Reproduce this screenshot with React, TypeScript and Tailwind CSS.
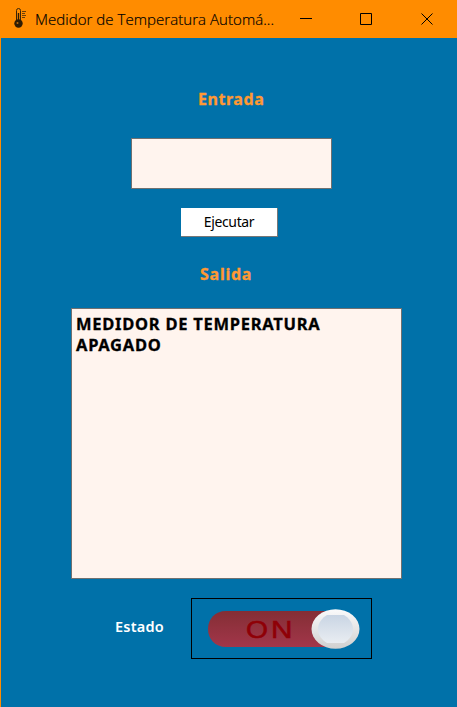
import React from "react";

function Thermometer() {
  return (
    <svg width="14" height="22" viewBox="0 0 14 22" className="shrink-0">
      <path d="M3.500 13V2.500a2 2 0 0 1 4 0V13" fill="none" stroke="#3a2508" strokeWidth="1" />
      <circle cx="5.500" cy="15.500" r="4.200" fill="#2e1c04" />
      <path d="M5.500 5v9" stroke="#2e1c04" strokeWidth="1.400" />
      <circle cx="4.500" cy="15" r="1" fill="#b86a10" />
      <path d="M9 3.500h4M9 5.500h3M9 7.500h4M9 9.500h3" stroke="#6b3f08" strokeWidth="1" />
    </svg>
  );
}

function TitleBar() {
  return (
    <header className="flex h-[38px] shrink-0 items-center bg-[#ff8c00] pl-[13px] text-black">
      <Thermometer />
      <h1 className="ml-[8px] w-[244px] shrink-0 whitespace-nowrap font-['Open_Sans',sans-serif] text-[15px] font-light leading-5 tracking-[0.05px] [-webkit-text-stroke:0.2px_#000]">
        Medidor de Temperatura Automá...
      </h1>
      <svg width="170" height="38" viewBox="0 0 170 38" className="ml-[8px] shrink-0" fill="none" stroke="#000">
        <path d="M13 18.500h12" />
        <path d="M73.500 13.500h11v11h-11z" />
        <path d="M134.500 13.500l11 11M145.500 13.500l-11 11" />
      </svg>
    </header>
  );
}

function Toggle() {
  return (
    <svg width="179" height="59" viewBox="192 599 179 59" className="block" role="img">
      <defs>
        <linearGradient id="track" x1="0" y1="0" x2="0" y2="1">
          <stop offset="0" stopColor="#842e35" />
          <stop offset="1" stopColor="#a2364a" />
        </linearGradient>
        <linearGradient id="rim" x1="0" y1="0" x2="0" y2="1">
          <stop offset="0" stopColor="#fafafb" />
          <stop offset="1" stopColor="#d0d0d0" />
        </linearGradient>
        <linearGradient id="face" x1="0" y1="0" x2="0" y2="1">
          <stop offset="0" stopColor="#c9d5e4" />
          <stop offset="1" stopColor="#e9edf2" />
        </linearGradient>
      </defs>
      <path d="M226 611H335V647H226C215 647 208 639 208 629S215 611 226 611Z" fill="url(#track)" />
      <g fontFamily="Liberation Sans, sans-serif" fontSize="23" fill="#8f0006" stroke="#8f0006" strokeWidth="0.5">
        <text x="246" y="637.500" textLength="22" lengthAdjust="spacingAndGlyphs">O</text>
        <text x="271" y="637.500" textLength="21.500" lengthAdjust="spacingAndGlyphs">N</text>
      </g>
      <ellipse cx="335.500" cy="629" rx="24" ry="19.700" fill="url(#rim)" />
      <path d="M327 615H344C349 618 353 623 353 629S349 640 344 643H327C322 640 318 635 318 629S322 618 327 615Z" fill="url(#face)" />
    </svg>
  );
}

export default function App() {
  return (
    <main className="flex h-[707px] w-[457px] flex-col overflow-hidden bg-[#0071a9] font-['Noto_Sans',sans-serif]">
      <TitleBar />
      <section className="flex flex-1 flex-col items-start border-l border-[#ff8c00]">
        <h2 className="ml-[197px] mt-[49px] h-6 whitespace-nowrap text-[16px] font-bold leading-6 tracking-[0.55px] text-[#ff9933] [-webkit-text-stroke:0.3px_#ff9933]">Entrada</h2>
        <input aria-label="Entrada" className="ml-[130px] mt-[27px] h-[51px] w-[201px] border border-[#707070] bg-[#fff4ee] px-1 outline-none" />
        <button className="ml-[180px] mt-[19px] h-[29px] w-[97px] whitespace-nowrap border-b border-r border-[#777777] bg-white text-[14px] leading-7 tracking-[-0.35px] text-black">
          Ejecutar
        </button>
        <h2 className="ml-[199px] mt-[25px] h-6 whitespace-nowrap text-[16px] font-bold leading-6 tracking-[0.75px] text-[#ff9933] [-webkit-text-stroke:0.3px_#ff9933]">Salida</h2>
        <div className="ml-[70px] mt-[22px] h-[271px] w-[331px] border border-[#707070] bg-[#fff4ee] pl-1 pt-1 text-[16.5px] font-bold leading-[21px] tracking-[0.73px] text-black [-webkit-text-stroke:0.3px_#000]">
          <p className="whitespace-nowrap">MEDIDOR DE TEMPERATURA</p>
          <p className="whitespace-nowrap">APAGADO</p>
        </div>
        <div className="mt-[19px] flex h-[61px] items-center">
          <span className="-mt-1.5 ml-[114px] w-[76px] whitespace-nowrap text-[14.5px] font-semibold leading-5 tracking-[0.2px] text-white">Estado</span>
          <div className="h-[61px] w-[181px] border border-black">
            <Toggle />
          </div>
        </div>
      </section>
    </main>
  );
}
